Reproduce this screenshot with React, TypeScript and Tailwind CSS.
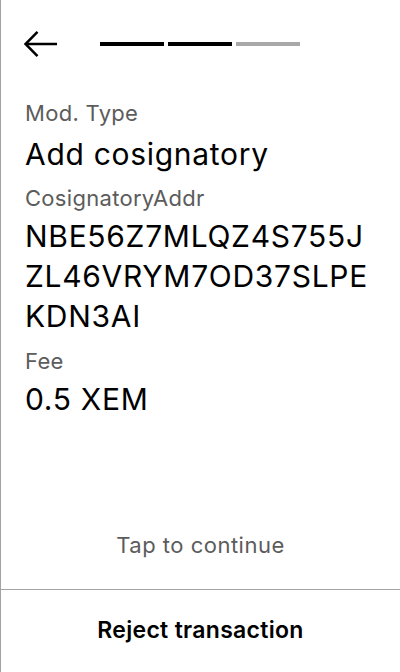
import React from "react";

export default function App() {
  return (
    <div
      className="w-[400px] h-[672px] flex flex-col bg-white border-l border-[#a3a3a3] text-black"
      style={{ fontFamily: "Inter, 'Noto Sans', sans-serif" }}
    >
      <div className="flex items-center h-[87px] pl-[23px]">
        <svg width="34" height="28" viewBox="0 0 34 28" fill="none" stroke="black" strokeWidth="2.5">
          <path d="M33 14H2" />
          <path d="M13.5 1.8L1.5 14L13.5 26.2" />
        </svg>
        <div className="flex gap-[4px] ml-[42px]">
          <div className="w-[64px] h-[4px] bg-black" />
          <div className="w-[64px] h-[4px] bg-black" />
          <div className="w-[64px] h-[4px] bg-[#a8a8a8]" />
        </div>
      </div>
      <div className="px-[24px] flex flex-col">
        <div className="text-[22px] leading-[28px] tracking-[0.3px] text-[#5c5c5c] mt-[12px]">Mod. Type</div>
        <div className="text-[30px] leading-[40px] tracking-[0.7px] mt-[7px]">Add cosignatory</div>
        <div className="text-[22px] leading-[28px] tracking-[0.3px] text-[#5c5c5c] mt-[10px]">CosignatoryAddr</div>
        <div className="text-[30px] leading-[40px] tracking-[0.7px] mt-[4px]">
          NBE56Z7MLQZ4S755J<br />ZL46VRYM7OD37SLPE<br />KDN3AI
        </div>
        <div className="text-[22px] leading-[28px] tracking-[0.3px] text-[#5c5c5c] mt-[11px]">Fee</div>
        <div className="text-[30px] leading-[40px] tracking-[0.7px] mt-[4px]">0.5 XEM</div>
      </div>
      <div className="flex-1" />
      <div className="text-center text-[22px] leading-[28px] tracking-[0.5px] text-[#5c5c5c] mb-[30px]">Tap to continue</div>
      <div className="h-[1px] bg-[#a3a3a3]" />
      <div className="h-[82px] flex items-center justify-center pb-[2px] text-[23px] tracking-[0.3px] font-semibold">
        Reject transaction
      </div>
    </div>
  );
}
